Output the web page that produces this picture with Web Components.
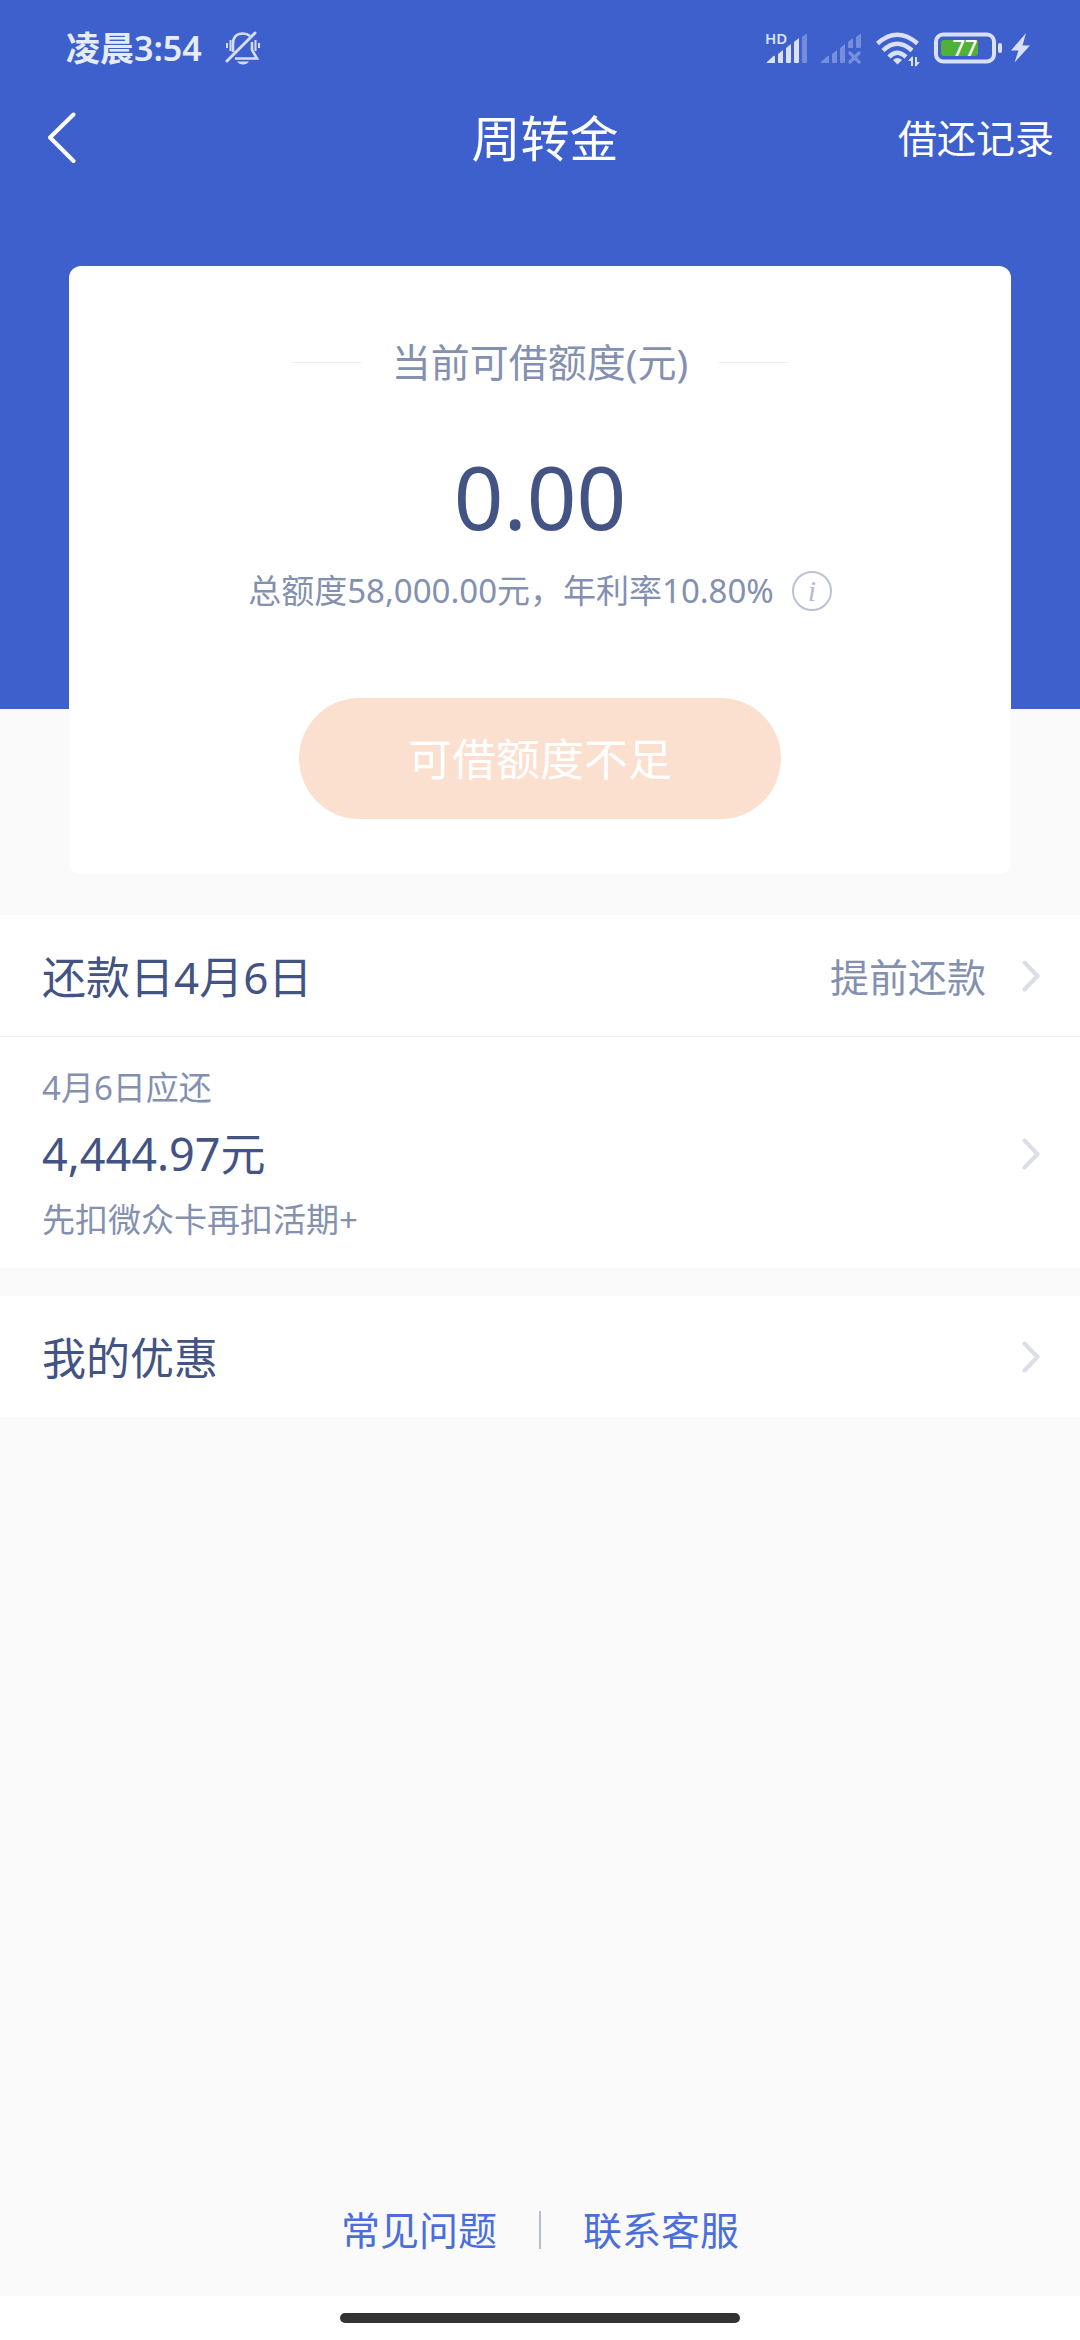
<!DOCTYPE html>
<html lang="zh-CN">
<head>
<meta charset="utf-8">
<meta name="viewport" content="width=device-width, initial-scale=1">
<title>周转金</title>
<style>
  :root {
    --blue: #3e60cc;
    --ink: #435383;
    --muted: #8490b0;
    --link: #4a6edb;
    --page: #fafafa;
    --line: #eeeeef;
    --small: 33px;
    --medium: 39px;
    --large: 44px;
  }
  body {
    margin: 0;
    background: var(--page);
    color: var(--ink);
    font-family: "Noto Sans", "Noto Sans CJK SC", sans-serif;
    font-size: var(--medium);
    line-height: 48px;
  }
</style>
</head>
<body>
<loan-page>
  <loan-hero>
    <status-bar time="凌晨3:54" battery="77"></status-bar>
    <nav-bar>周转金<a slot="action" href="#records">借还记录</a></nav-bar>
    <quota-card amount="0.00" action="可借额度不足">
      <span slot="label">当前可借额度(元)</span>
      <span slot="detail">总额度58,000.00元，年利率10.80%</span>
    </quota-card>
  </loan-hero>
  <cell-group>
    <link-cell href="#repay" divided>还款日4月6日<span slot="value">提前还款</span></link-cell>
    <due-cell href="#due">
      <span slot="date">4月6日应还</span>
      <span slot="amount">4,444.97元</span>
      <span slot="note">先扣微众卡再扣活期+</span>
    </due-cell>
  </cell-group>
  <cell-group>
    <link-cell href="#offers">我的优惠</link-cell>
  </cell-group>
  <page-footer slot="footer">
    <a slot="first" href="#faq">常见问题</a>
    <a slot="second" href="#service">联系客服</a>
  </page-footer>
  <home-indicator slot="footer"></home-indicator>
</loan-page>

<script>
const define = (name, render) => customElements.define(name, class extends HTMLElement {
  constructor() {
    super();
    this.attachShadow({ mode: "open" });
  }
  connectedCallback() {
    this.shadowRoot.innerHTML = render(this);
  }
});

define("loan-page", () => `
  <style>
    :host { display: flex; flex-direction: column; min-height: 100vh; }
    main { display: flex; flex-direction: column; gap: 28px; }
    footer { margin-top: auto; }
  </style>
  <main><slot></slot></main>
  <footer><slot name="footer"></slot></footer>`);

define("loan-hero", () => `
  <style>
    :host {
      display: block;
      padding-bottom: 13px;
      background: linear-gradient(var(--blue), var(--blue)) top / 100% 709px no-repeat;
    }
  </style>
  <slot></slot>`);

define("status-bar", el => `
  <style>
    :host {
      display: flex; align-items: center; height: 96px; padding: 0 49px 0 66px;
      color: #e6ebfb; font-size: 34px; font-weight: 600;
    }
    .bell { margin-left: 23px; }
    .right { display: flex; align-items: center; margin-left: auto; }
    svg { display: block; overflow: visible; }
    .sim2 { margin-left: 13px; }
    .wifi { margin-left: 14px; }
    .battery { margin-left: 14px; }
    .bolt { margin-left: 8px; }
  </style>
  <time>${el.getAttribute("time")}</time>
  <svg class="bell" width="36" height="34" viewBox="0 0 36 34" fill="none" stroke="#d5dcf6" stroke-width="2.6" aria-hidden="true">
    <path d="M8 21V13Q8 2.500 18 2.500Q22 2.500 25 5"/>
    <path d="M27 11V19L32 27.500H10"/>
    <path d="M30 2L2 30" stroke-width="3" stroke-linecap="round"/>
    <path d="M2 12v5M5.500 9v11M30.500 9v11M34 12v5" stroke-width="2"/>
    <path d="M12 30.500h12q-2 3-6 3t-6-3z" fill="#d5dcf6" stroke="none"/>
  </svg>
  <div class="right">
    <svg width="44" height="36" viewBox="0 0 44 36" fill="#d9e0f8" aria-hidden="true">
      <text x="1" y="14" font-family="Noto Sans, sans-serif" font-size="15" font-weight="600">HD</text>
      <path d="M3 32l6.500-6q1.500-1 1.500 1v6h-8q-1 0 0-1zM14 24l5-4v13h-4q-1 0-1-1zM22 18l5-4v18q0 1-1 1h-3q-1 0-1-1zM30 12l5-4v24q0 1-1 1h-3q-1 0-1-1z"/>
      <path opacity=".35" d="M38 7l4-3q1-.5 1 .5V32q0 1-1 1h-3q-1 0-1-1z"/>
    </svg>
    <svg class="sim2" width="41" height="36" viewBox="0 0 41 36" fill="#d9e0f8" opacity=".36" aria-hidden="true">
      <path d="M0 32l6.500-6q1.500-1 1.500 1v6H0q-1 0 0-1zM11 24l5-4v13h-4q-1 0-1-1zM19 18l5-4v18q0 1-1 1h-3q-1 0-1-1zM27 12l5-4v9q0 1-1 1h-3q-1 0-1-1zM35 7l4-3q1-.5 1 .5V17q0 1-1 1h-3q-1 0-1-1z"/>
      <path d="M29 23l9 9M38 23l-9 9" stroke="#d9e0f8" stroke-width="3.500" stroke-linecap="round"/>
    </svg>
    <svg class="wifi" width="44" height="36" viewBox="0 0 44 36" fill="none" stroke="#d9e0f8" stroke-width="4.500" aria-hidden="true">
      <path d="M1.500 13.500Q21 -4 41.500 13.500M7 20.500Q21 7 36 20.500M13 27Q21 18.500 30 27"/>
      <path d="M17 30q4.500-4 9 0l-4.500 4.500z" fill="#d9e0f8" stroke="none"/>
      <path d="M36 36V27M40 27V36" stroke-width="2"/>
      <path d="M32 31l4.500-5v5zM44 32l-4.500 5v-5z" fill="#d9e0f8" stroke="none"/>
    </svg>
    <svg class="battery" width="68" height="32" viewBox="0 0 68 32" role="img" aria-label="battery">
      <rect x="2" y="2.500" width="58" height="27" rx="7" fill="none" stroke="#d9e0f8" stroke-width="4"/>
      <rect x="7" y="8" width="37" height="16" rx="3" fill="#4fb236"/>
      <rect x="64" y="11" width="4" height="10" rx="2" fill="#d9e0f8"/>
      <text x="31" y="24" text-anchor="middle" fill="#fff" font-family="Noto Sans, sans-serif" font-size="22" font-weight="500">${el.getAttribute("battery")}</text>
    </svg>
    <svg class="bolt" width="21" height="30" viewBox="0 0 21 30" fill="#d9e0f8" aria-hidden="true">
      <path d="M16 0L1 17.500h7.500L4.500 29.500 20 12.500h-7.500z"/>
    </svg>
  </div>`);

define("nav-bar", () => `
  <style>
    :host { display: grid; grid-template-columns: 1fr auto 1fr; align-items: center; height: 84px; padding: 0 26px 0 36px; color: #fff; }
    button { justify-self: start; padding: 0 10px; border: 0; background: none; }
    svg { display: block; }
    h1 { margin: 0; font-size: 49px; font-weight: 400; line-height: 60px; }
    .action { justify-self: end; }
    ::slotted(a) { color: inherit; text-decoration: none; }
  </style>
  <button type="button" aria-label="返回">
    <svg width="32" height="52" viewBox="0 0 32 52" fill="none" stroke="#fff" stroke-width="4" stroke-linecap="round" stroke-linejoin="round"><path d="M27.500 2.500L4 25.500L27.500 49"/></svg>
  </button>
  <h1><slot></slot></h1>
  <div class="action"><slot name="action"></slot></div>`);

define("quota-card", el => `
  <style>
    :host {
      display: flex; flex-direction: column; align-items: center;
      margin: 86px 69px 0; padding: 72px 24px 55px;
      border-radius: 12px; background: #fff; color: var(--muted);
    }
    .label { display: flex; align-items: center; gap: 31px; }
    .label::before, .label::after { content: ""; width: 69px; height: 1px; background: var(--line); }
    .amount { margin-top: 58px; color: var(--ink); font-size: 87px; line-height: 104px; }
    .detail { display: flex; align-items: center; gap: 18px; margin-top: 23px; font-size: var(--small); line-height: 40px; }
    .info {
      box-sizing: border-box; width: 40px; height: 40px; padding: 0;
      border: 2px solid #bcc2d3; border-radius: 50%; background: none; color: #b5bccf;
      font: italic 30px/36px "Liberation Serif", serif;
    }
    .submit {
      width: 482px; height: 121px; margin-top: 87px; padding: 0;
      border: 0; border-radius: 61px; background: #fbe0d0; color: #fff;
      font: inherit; font-size: var(--large);
    }
  </style>
  <div class="label"><slot name="label"></slot></div>
  <div class="amount">${el.getAttribute("amount")}</div>
  <div class="detail"><slot name="detail"></slot><button class="info" type="button" aria-label="说明">i</button></div>
  <button class="submit" type="button" disabled>${el.getAttribute("action")}</button>`);

define("cell-group", () => `
  <style>:host { display: block; background: #fff; }</style>
  <slot></slot>`);

define("chevron-icon", () => `
  <style>:host, svg { display: block; }</style>
  <svg width="18" height="32" viewBox="0 0 18 32" fill="none" stroke="#dcdee7" stroke-width="4" stroke-linecap="round" stroke-linejoin="round" aria-hidden="true"><path d="M2.500 2.500L15.500 16L2.500 29.500"/></svg>`);

define("link-cell", el => `
  <style>
    :host { display: block; }
    :host([divided]) { border-bottom: 1px solid var(--line); }
    a { display: flex; align-items: center; gap: 36px; height: 121px; padding: 0 40px 0 42px; color: inherit; text-decoration: none; }
    .title { flex: 1; padding-top: 2px; font-size: var(--large); }
    .value { padding-top: 2px; color: var(--muted); }
  </style>
  <a href="${el.getAttribute("href")}">
    <span class="title"><slot></slot></span>
    <span class="value"><slot name="value"></slot></span>
    <chevron-icon></chevron-icon>
  </a>`);

define("due-cell", el => `
  <style>
    :host { display: block; }
    a { display: flex; align-items: center; padding: 27px 40px 24px 42px; color: inherit; text-decoration: none; }
    .lines { flex: 1; display: flex; flex-direction: column; gap: 18px; }
    .minor { color: var(--muted); font-size: var(--small); }
    .amount { font-size: 45px; }
  </style>
  <a href="${el.getAttribute("href")}">
    <div class="lines">
      <div class="minor"><slot name="date"></slot></div>
      <div class="amount"><slot name="amount"></slot></div>
      <div class="minor"><slot name="note"></slot></div>
    </div>
    <chevron-icon></chevron-icon>
  </a>`);

define("page-footer", () => `
  <style>
    :host { display: flex; justify-content: center; align-items: center; gap: 42px; padding: 20px 0 42px; }
    .rule { width: 2px; height: 38px; background: #b7bdcb; }
    ::slotted(a) { color: var(--link); text-decoration: none; }
  </style>
  <slot name="first"></slot><span class="rule"></span><slot name="second"></slot>`);

define("home-indicator", () => `
  <style>
    :host { display: flex; justify-content: center; align-items: center; height: 44px; background: #fff; }
    span { width: 37%; height: 10px; border-radius: 5px; background: #333; }
  </style>
  <span></span>`);
</script>
</body>
</html>
